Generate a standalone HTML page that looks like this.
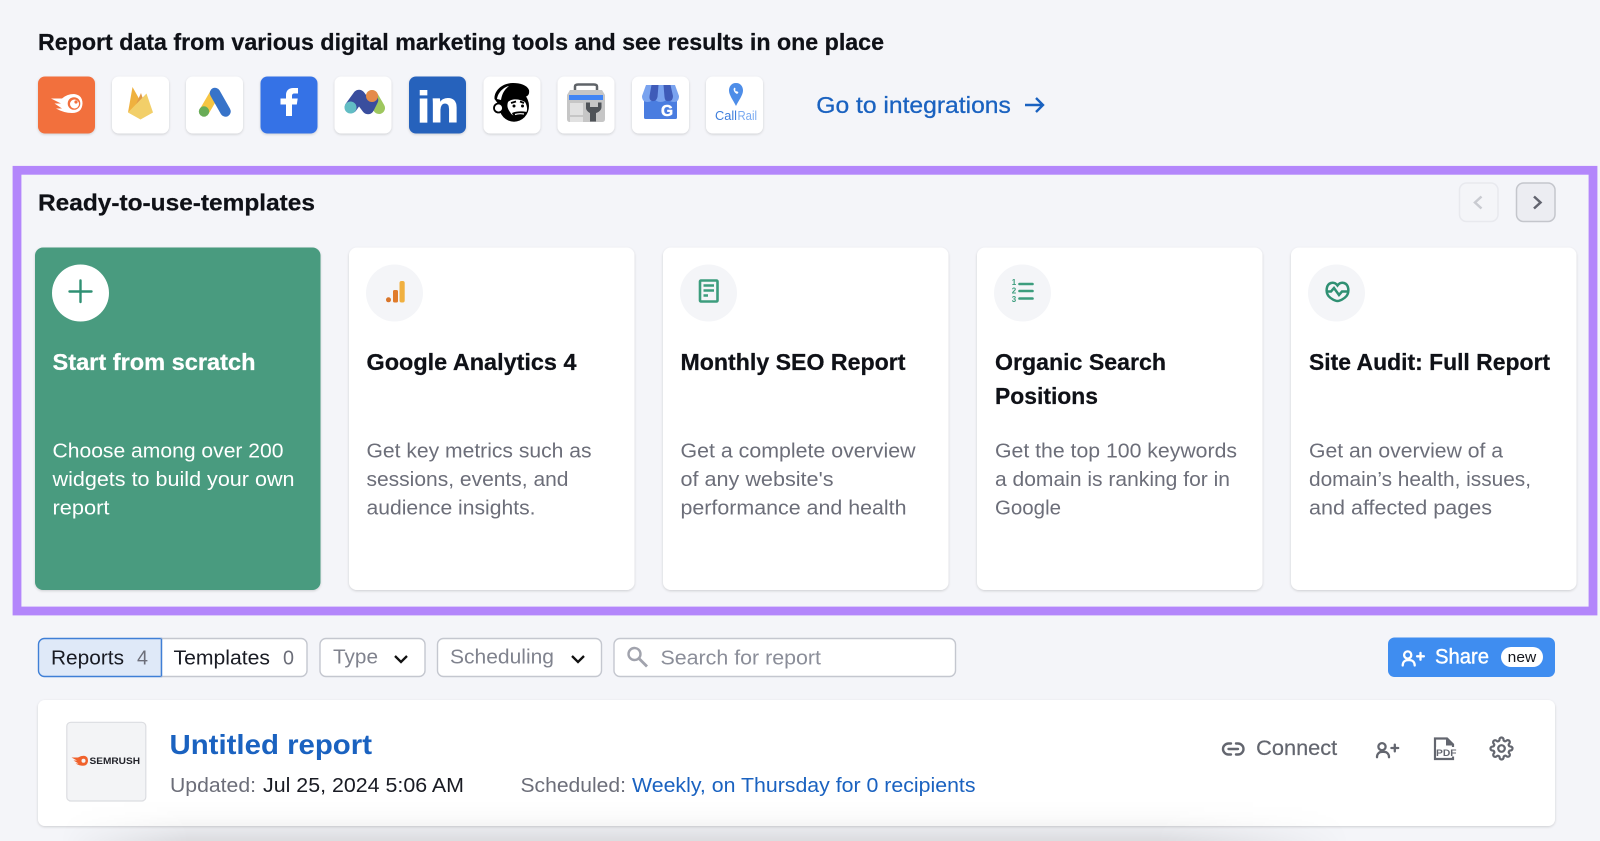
<!DOCTYPE html>
<html lang="en"><head><meta charset="utf-8"><title>Report templates</title>
<style>
html,body{margin:0;padding:0;background:#f4f5f9;width:1600px;height:841px;overflow:hidden}
svg{display:block}
text{font-family:"Liberation Sans",sans-serif;white-space:pre}
.h{font-weight:700;font-size:23.5px;fill:#0f1117;stroke:#0f1117;stroke-width:.25px}
.t{font-weight:700;font-size:23.5px;fill:#0f1117;stroke:#0f1117;stroke-width:.25px}
.b{font-size:20.5px;fill:#6c6e79}
.w{fill:#fff;stroke:none}
.t.w{stroke:#fff}
.r{font-size:20.5px;fill:#191b23}
.g{font-size:20.5px;fill:#6c6e79}
.l{font-size:20.5px;fill:#1a62c0}
.ph{font-size:20.5px;fill:#8b8e99}
</style></head><body>
<svg width="1600" height="841" viewBox="0 0 1600 841" xmlns="http://www.w3.org/2000/svg">
<defs>
<filter id="s" x="-10%" y="-10%" width="120%" height="120%"><feDropShadow dx="0" dy="1" stdDeviation="1.3" flood-color="#000" flood-opacity=".16"/></filter>
<linearGradient id="vg" x1="0" y1="0" x2="0" y2="1"><stop offset="0" stop-color="#000" stop-opacity="0"/><stop offset=".35" stop-color="#000" stop-opacity=".012"/><stop offset=".65" stop-color="#000" stop-opacity=".04"/><stop offset="1" stop-color="#000" stop-opacity=".1"/></linearGradient>
<linearGradient id="hg" gradientUnits="userSpaceOnUse" x1="60" y1="0" x2="1350" y2="0"><stop offset="0" stop-color="#fff" stop-opacity="0"/><stop offset=".1" stop-color="#fff"/><stop offset=".85" stop-color="#fff"/><stop offset="1" stop-color="#fff" stop-opacity="0"/></linearGradient>
<mask id="hm" maskUnits="userSpaceOnUse" x="60" y="800" width="1290" height="41"><rect x="60" y="800" width="1290" height="41" fill="url(#hg)"/></mask>
<g id="pp" fill="none" stroke-width="2.3" stroke-linecap="round"><circle cx="1382" cy="746.7" r="3.6"/><path d="M1377 757.2c0-3.6 2.3-5.4 5.2-5.4h1.6c2.9 0 5.2 1.8 5.2 5.4"/><path d="M1391.4 748h6.8M1394.8 744.6v6.8"/></g>
</defs>
<rect width="1600" height="841" fill="#f4f5f9"/>
<text class="h" x="38" y="50" textLength="846" lengthAdjust="spacingAndGlyphs">Report data from various digital marketing tools and see results in one place</text>

<!-- integration tiles -->
<g filter="url(#s)">
<rect x="38" y="76.500" width="57" height="57" rx="7" fill="#f26f3d"/>
<rect x="112" y="76.500" width="57" height="57" rx="7" fill="#fff"/>
<rect x="186" y="76.500" width="57" height="57" rx="7" fill="#fff"/>
<rect x="260.500" y="76.500" width="57" height="57" rx="7" fill="#3672e6"/>
<rect x="334.500" y="76.500" width="57" height="57" rx="7" fill="#fff"/>
<rect x="409" y="76.500" width="57" height="57" rx="7" fill="#2862bc"/>
<rect x="483.500" y="76.500" width="57" height="57" rx="7" fill="#fff"/>
<rect x="557.500" y="76.500" width="57" height="57" rx="7" fill="#fff"/>
<rect x="632" y="76.500" width="57" height="57" rx="7" fill="#fff"/>
<rect x="706" y="76.500" width="57" height="57" rx="7" fill="#fff"/>
</g>
<!-- semrush -->
<path d="M51 98.500H62Q67 94 74 94Q82.500 95 82.500 103.500Q82 113 72 113Q64 113 56 108.500H62L54.500 103.500H61Z" fill="#fff"/>
<circle cx="74" cy="103.500" r="6.300" fill="#f26f3d"/><circle cx="74.500" cy="104" r="4.500" fill="#fff"/><circle cx="76" cy="102" r="1.600" fill="#f26f3d"/>
<!-- firebase -->
<path d="M128 112.500L132.500 87L141.500 103Z" fill="#efb13f"/>
<path d="M133 111L141 93L147 111Z" fill="#e09a48"/>
<path d="M128 112.500L146.500 93.500L153 112.500L140.500 119.500Z" fill="#f2cf69"/>
<!-- ads -->
<path d="M215 93L204.500 111" stroke="#f6c542" stroke-width="10" fill="none"/>
<path d="M215 93L225.500 111.500" stroke="#3773c9" stroke-width="10.500" stroke-linecap="round" fill="none"/>
<circle cx="204" cy="111.500" r="5.200" fill="#69ac57"/>
<!-- facebook -->
<path d="M286 116V104.500H280.500V98.500H286V95C286 90.500 289 88 293 88H298V93.500H294.500C292.700 93.500 292 94.300 292 96V98.500H297.700L296.800 104.500H292V116Z" fill="#fff"/>
<!-- matomo -->
<path d="M372 96L379 108" stroke="#9ec75e" stroke-width="12" stroke-linecap="round" fill="none"/>
<path d="M351 107L359 96L368 108L372 100" stroke="#3a4e9e" stroke-width="12.500" stroke-linecap="round" stroke-linejoin="round" fill="none"/>
<circle cx="350.500" cy="107.500" r="6" fill="#62bdc4"/><circle cx="372" cy="96" r="6" fill="#e58b4a"/>
<!-- linkedin -->
<text x="417" y="122" font-size="44" font-weight="700" fill="#fff" stroke="#fff" stroke-width="1" textLength="42" lengthAdjust="spacingAndGlyphs">in</text>
<!-- mailchimp -->
<ellipse cx="514" cy="106" rx="15" ry="15.700" fill="#000"/>
<path d="M494.500 99C494 90 503 83 513 83C520 83 527 85 529 90C530 96 526 98 520 96C511 93 503 97 499 105Z" fill="#000"/>
<path d="M497 99C498 92 504 87 509 86C504 90 502 94 501 100Z" fill="#fff"/>
<circle cx="498.500" cy="108" r="4.500" fill="#fff" stroke="#000" stroke-width="1.800"/>
<path d="M508 102C512 98 520 99 525 102C528 107 528 113 523 116C517 118 512 116 510 112C507 108 507 105 508 102Z" fill="#fff"/>
<path d="M511 103l5-1.500M520 101.500l4 1.500" stroke="#000" stroke-width="1.800" fill="none"/>
<circle cx="514" cy="106" r="1.500"/><circle cx="522.500" cy="106" r="1.500"/>
<path d="M512 113C516 111 522 111 527 112C526 117 522 118 518 118C515 118 513 116 512 113Z" fill="#000"/>
<path d="M515 114.500C518 113.500 521 113.500 524 114" stroke="#fff" stroke-width="1.200" fill="none"/>
<!-- search console -->
<path d="M575 90V86.500Q575 84.500 578 84.500H594Q597 84.500 597 86.500V90" fill="none" stroke="#5f6368" stroke-width="2.500"/>
<path d="M567 95L570 90H602L605 95V119Q605 122 602 122H570Q567 122 567 119Z" fill="#c6c6c6"/>
<rect x="569" y="95" width="34" height="5" fill="#4285f4"/>
<rect x="570" y="103" width="13" height="12" fill="#e1e1e1"/><rect x="570" y="117" width="13" height="5" fill="#e1e1e1"/>
<path d="M586 102.500V108C586 110 588 112 590 113V121.500H596V113C599 112 601.500 110 601.500 107V102.500L598 102.500V107H590V102.500Z" fill="#4f5358"/>
<!-- gmb -->
<rect x="644" y="95" width="33" height="24" rx="1.500" fill="#4a7de0"/>
<path d="M646 85H675L679 96Q679 102 674 102Q669 102 667.500 98Q665.500 102 660.500 102Q656 102 654 98Q652 102 647.500 102Q642 102 642 96Z" fill="#7aa3ef"/>
<path d="M651.500 85H658.500L657.500 97Q656 102 652 101Q649 100 649.500 96Z" fill="#3f5bb8"/>
<path d="M663.500 85H670.500L673 96Q673 101 669 101Q665 102 664.500 97Z" fill="#3f5bb8"/>
<text x="661" y="116" font-size="15.500" font-weight="700" fill="#fff" stroke="#fff" stroke-width=".5">G</text>
<!-- callrail -->
<path d="M736 83C731 83 729 87 729 90.500C729 95 733 100 736 106C739 100 743 95 743 90.500C743 87 741 83 736 83Z" fill="#4d8de8"/>
<path d="M734.500 87.500l-1 1.500c.3 2.500 1.500 4 3.500 5l1.500-1.200-1.500-1.800-1 .5c-.5-.5-.8-1-1-1.700l.8-.8Z" fill="#fff"/>
<text x="715" y="120" font-size="12.500" fill="#3f7fdc" textLength="22" lengthAdjust="spacingAndGlyphs">Call</text>
<text x="737.500" y="120" font-size="12.500" fill="#7aaaf0" textLength="19.500" lengthAdjust="spacingAndGlyphs">Rail</text>

<text x="816.300" y="113" font-size="23.500" fill="#1a62c0" stroke="#1a62c0" stroke-width=".3" textLength="194.500" lengthAdjust="spacingAndGlyphs">Go to integrations</text>
<path d="M1025 105H1043M1036 98L1043 105L1036 112" fill="none" stroke="#1a62c0" stroke-width="2.400"/>

<!-- frame -->
<rect x="17" y="170.300" width="1576" height="440.700" fill="none" stroke="#b386fb" stroke-width="8.800"/>
<text class="h" x="38" y="210.500" textLength="277" lengthAdjust="spacingAndGlyphs">Ready-to-use-templates</text>
<rect x="1459.500" y="183" width="38.500" height="38.500" rx="7" fill="#f4f5f8" stroke="#e8e9ee" stroke-width="1.500"/>
<path d="M1481.500 196.500L1475 202.500L1481.500 208.500" fill="none" stroke="#c9cbd1" stroke-width="2.500"/>
<rect x="1516.500" y="183" width="38.500" height="38.500" rx="7" fill="#ecedf2" stroke="#c4c6cc" stroke-width="1.500"/>
<path d="M1534 196.500L1540.500 202.500L1534 208.500" fill="none" stroke="#62646f" stroke-width="2.500"/>

<!-- cards -->
<g filter="url(#s)">
<rect x="35" y="247.500" width="285.500" height="342.500" rx="8" fill="#489b7f"/>
<rect x="349" y="247.500" width="285.500" height="342.500" rx="8" fill="#fff"/>
<rect x="663" y="247.500" width="285.500" height="342.500" rx="8" fill="#fff"/>
<rect x="977" y="247.500" width="285.500" height="342.500" rx="8" fill="#fff"/>
<rect x="1291" y="247.500" width="285.500" height="342.500" rx="8" fill="#fff"/>
</g>
<circle cx="80.500" cy="293" r="28.500" fill="#fff"/>
<path d="M80.500 280.500V302M69.500 291.500H91.500" stroke="#2f9073" stroke-width="2.400" stroke-linecap="round"/>
<circle cx="394.500" cy="293" r="28.500" fill="#f4f5f8"/>
<circle cx="388.500" cy="299.800" r="2.500" fill="#d9762b"/>
<rect x="393" y="290" width="5" height="12.500" rx="1.500" fill="#e07b2a"/>
<rect x="399.500" y="281" width="5.200" height="21.500" rx="2" fill="#f0b040"/>
<circle cx="708.500" cy="293" r="28.500" fill="#f4f5f8"/>
<rect x="700" y="280.500" width="17.500" height="21" rx="1" fill="none" stroke="#3c9d7d" stroke-width="2.600"/>
<path d="M703.500 285.500H714M703.500 290.500H714M703.500 295.500H708" stroke="#3c9d7d" stroke-width="2.400"/>
<circle cx="1022.500" cy="293" r="28.500" fill="#f4f5f8"/>
<text x="1011.800" y="285" font-size="8" font-weight="700" fill="#3c9d7d">1</text>
<text x="1011.800" y="293.500" font-size="8" font-weight="700" fill="#3c9d7d">2</text>
<text x="1011.800" y="302" font-size="8" font-weight="700" fill="#3c9d7d">3</text>
<path d="M1019.500 284H1032.500M1019.500 291H1032.500M1019.500 298.500H1032.500" stroke="#3c9d7d" stroke-width="2.600" stroke-linecap="round"/>
<circle cx="1336.500" cy="293" r="28.500" fill="#f4f5f8"/>
<path d="M1328.500 296C1325.500 292 1326 284.500 1331 283C1334 282.200 1336 283.500 1337.500 285.500C1339 283.500 1341 282.200 1344 283C1349 284.500 1349.500 292 1346.500 296C1344.500 298.500 1340 301 1337.500 301C1335 301 1330.500 298.500 1328.500 296Z" fill="none" stroke="#2f9073" stroke-width="2.500"/>
<path d="M1326 291.500H1331L1334 288L1339 295L1342 291.500H1349" fill="none" stroke="#2f9073" stroke-width="2.500"/>

<text class="t w" x="52.500" y="370" textLength="203" lengthAdjust="spacingAndGlyphs">Start from scratch</text>
<text class="b w" x="52.500" y="457.500" textLength="231" lengthAdjust="spacingAndGlyphs">Choose among over 200</text>
<text class="b w" x="52.500" y="486" textLength="242" lengthAdjust="spacingAndGlyphs">widgets to build your own</text>
<text class="b w" x="52.500" y="514.500" textLength="57" lengthAdjust="spacingAndGlyphs">report</text>

<text class="t" x="366.500" y="370" textLength="210" lengthAdjust="spacingAndGlyphs">Google Analytics 4</text>
<text class="b" x="366.500" y="457.500" textLength="225" lengthAdjust="spacingAndGlyphs">Get key metrics such as</text>
<text class="b" x="366.500" y="486" textLength="202" lengthAdjust="spacingAndGlyphs">sessions, events, and</text>
<text class="b" x="366.500" y="514.500" textLength="169" lengthAdjust="spacingAndGlyphs">audience insights.</text>

<text class="t" x="680.500" y="370" textLength="225" lengthAdjust="spacingAndGlyphs">Monthly SEO Report</text>
<text class="b" x="680.500" y="457.500" textLength="235" lengthAdjust="spacingAndGlyphs">Get a complete overview</text>
<text class="b" x="680.500" y="486" textLength="153" lengthAdjust="spacingAndGlyphs">of any website's</text>
<text class="b" x="680.500" y="514.500" textLength="226" lengthAdjust="spacingAndGlyphs">performance and health</text>

<text class="t" x="995" y="370" textLength="171" lengthAdjust="spacingAndGlyphs">Organic Search</text>
<text class="t" x="995" y="404" textLength="103" lengthAdjust="spacingAndGlyphs">Positions</text>
<text class="b" x="995" y="457.500" textLength="242" lengthAdjust="spacingAndGlyphs">Get the top 100 keywords</text>
<text class="b" x="995" y="486" textLength="235" lengthAdjust="spacingAndGlyphs">a domain is ranking for in</text>
<text class="b" x="995" y="514.500" textLength="66" lengthAdjust="spacingAndGlyphs">Google</text>

<text class="t" x="1309" y="370" textLength="241" lengthAdjust="spacingAndGlyphs">Site Audit: Full Report</text>
<text class="b" x="1309" y="457.500" textLength="194" lengthAdjust="spacingAndGlyphs">Get an overview of a</text>
<text class="b" x="1309" y="486" textLength="222" lengthAdjust="spacingAndGlyphs">domain’s health, issues,</text>
<text class="b" x="1309" y="514.500" textLength="183" lengthAdjust="spacingAndGlyphs">and affected pages</text>

<!-- filter row -->
<path d="M161.500 638.500H44.500a6 6 0 0 0-6 6v26a6 6 0 0 0 6 6H161.500Z" fill="#dfe9f8" stroke="#3f7fd6" stroke-width="1.400"/>
<path d="M161.500 638.500H301a6 6 0 0 1 6 6v26a6 6 0 0 1-6 6H161.500Z" fill="#fff" stroke="#c4c7cf" stroke-width="1.400"/>
<path d="M161.500 638.500V676.500" stroke="#3f7fd6" stroke-width="1.400"/>
<text class="r" x="51" y="664.500" textLength="73" lengthAdjust="spacingAndGlyphs">Reports</text>
<text class="g" x="137" y="664.500" textLength="11" lengthAdjust="spacingAndGlyphs">4</text>
<text class="r" x="173.500" y="664.500" textLength="96.500" lengthAdjust="spacingAndGlyphs">Templates</text>
<text class="g" x="283" y="664.500" textLength="11" lengthAdjust="spacingAndGlyphs">0</text>
<rect x="320" y="638.500" width="105" height="38" rx="6" fill="#fff" stroke="#c4c7cf" stroke-width="1.400"/>
<text class="g" x="333" y="663.500" textLength="45" lengthAdjust="spacingAndGlyphs" style="fill:#80838e">Type</text>
<path d="M395 656L401 662L407 656" fill="none" stroke="#111" stroke-width="2.300"/>
<rect x="437.500" y="638.500" width="164" height="38" rx="6" fill="#fff" stroke="#c4c7cf" stroke-width="1.400"/>
<text class="g" x="450" y="663.500" textLength="104" lengthAdjust="spacingAndGlyphs" style="fill:#80838e">Scheduling</text>
<path d="M572 656L578 662L584 656" fill="none" stroke="#111" stroke-width="2.300"/>
<rect x="614" y="638.500" width="341.500" height="38" rx="6" fill="#fff" stroke="#c4c7cf" stroke-width="1.400"/>
<circle cx="634.500" cy="654" r="6" fill="none" stroke="#a1a3ad" stroke-width="2.400"/>
<path d="M639 658.500L647 666.500" stroke="#a1a3ad" stroke-width="2.800"/>
<text class="ph" x="660.500" y="664.500" textLength="160.500" lengthAdjust="spacingAndGlyphs">Search for report</text>

<rect x="1388" y="637.500" width="167" height="39.500" rx="6.500" fill="#3f8df0"/>
<use href="#pp" stroke="#fff" transform="translate(25.700 -91.700)"/>
<text x="1435" y="663.500" font-size="21.500" fill="#fff" stroke="#fff" stroke-width=".4" textLength="54" lengthAdjust="spacingAndGlyphs">Share</text>
<rect x="1501" y="647" width="42" height="20" rx="10" fill="#fff"/>
<text x="1507.700" y="662" font-size="14.500" fill="#14161c" textLength="28.500" lengthAdjust="spacingAndGlyphs">new</text>

<!-- report card -->
<rect x="38" y="700" width="1517" height="126" rx="7" fill="#fff" filter="url(#s)"/>
<rect x="66.800" y="722.300" width="79" height="78.700" rx="4" fill="#f3f4f6" stroke="#dcdde1" stroke-width="1.200"/>
<path d="M71.500 757.500H78Q81 755.800 84 755.800Q88 756.300 88 761Q87.500 765.800 83 765.800Q79.500 765.800 75.500 763.500H78.500L73.500 760.500H77Z" fill="#f0622c"/>
<circle cx="83.500" cy="760.800" r="2" fill="#f3f4f6"/>
<text x="89.500" y="764" font-size="9" font-weight="700" fill="#22232a" textLength="50.500" lengthAdjust="spacingAndGlyphs">SEMRUSH</text>
<text x="169.500" y="754" font-size="28" font-weight="700" fill="#1a62c0" textLength="202.500" lengthAdjust="spacingAndGlyphs">Untitled report</text>
<text class="g" x="170" y="792" textLength="86" lengthAdjust="spacingAndGlyphs">Updated:</text>
<text class="r" x="263" y="792" textLength="201" lengthAdjust="spacingAndGlyphs">Jul 25, 2024 5:06 AM</text>
<text class="g" x="520.500" y="792" textLength="105.500" lengthAdjust="spacingAndGlyphs">Scheduled:</text>
<text class="l" x="632" y="792" textLength="343.500" lengthAdjust="spacingAndGlyphs">Weekly, on Thursday for 0 recipients</text>

<path d="M1231 743.500H1228.500a5.500 5.500 0 0 0 0 11H1231M1236 743.500H1238a5.500 5.500 0 0 1 0 11H1236M1228.500 749H1238" fill="none" stroke="#63666f" stroke-width="2.400" stroke-linecap="round"/>
<text x="1256.200" y="755" font-size="21" fill="#63666f" stroke="#63666f" stroke-width=".2" textLength="81" lengthAdjust="spacingAndGlyphs">Connect</text>
<use href="#pp" stroke="#63666f"/>
<path d="M1447 738.500H1435V759H1453V744.500Z" fill="none" stroke="#63666f" stroke-width="2.200"/>
<path d="M1446 737.500V745.500H1454Z" fill="#63666f"/>
<rect x="1436" y="747" width="20.500" height="9.500" fill="#fff"/>
<text x="1436" y="755.800" font-size="9.500" font-weight="700" fill="#63666f" textLength="20.500" lengthAdjust="spacingAndGlyphs">PDF</text>
<circle cx="1501.500" cy="748.500" r="3.300" fill="none" stroke="#63666f" stroke-width="2.200"/>
<path transform="translate(1489.500 736.500)" fill="none" stroke="#63666f" stroke-width="2.200" d="M19.400 15a1.650 1.650 0 0 0 .33 1.820l.06.06a2 2 0 0 1 0 2.830 2 2 0 0 1-2.830 0l-.06-.06a1.650 1.650 0 0 0-1.820-.33 1.650 1.650 0 0 0-1 1.510V21a2 2 0 0 1-2 2 2 2 0 0 1-2-2v-.09A1.650 1.650 0 0 0 9 19.400a1.650 1.650 0 0 0-1.820.33l-.06.06a2 2 0 0 1-2.830 0 2 2 0 0 1 0-2.830l.06-.06a1.650 1.650 0 0 0 .33-1.820 1.650 1.650 0 0 0-1.510-1H3a2 2 0 0 1-2-2 2 2 0 0 1 2-2h.09A1.650 1.650 0 0 0 4.600 9a1.650 1.650 0 0 0-.33-1.820l-.06-.06a2 2 0 0 1 0-2.830 2 2 0 0 1 2.830 0l.06.06a1.650 1.650 0 0 0 1.820.33H9a1.650 1.650 0 0 0 1-1.510V3a2 2 0 0 1 2-2 2 2 0 0 1 2 2v.09a1.650 1.650 0 0 0 1 1.510 1.650 1.650 0 0 0 1.820-.33l.06-.06a2 2 0 0 1 2.830 0 2 2 0 0 1 0 2.830l-.06.06a1.650 1.650 0 0 0-.33 1.820V9a1.650 1.650 0 0 0 1.510 1H21a2 2 0 0 1 2 2 2 2 0 0 1-2 2h-.09a1.650 1.650 0 0 0-1.510 1z"/>

<!-- bottom shadow -->
<rect x="60" y="800" width="1290" height="41" fill="url(#vg)" mask="url(#hm)"/>
</svg>
</body></html>
